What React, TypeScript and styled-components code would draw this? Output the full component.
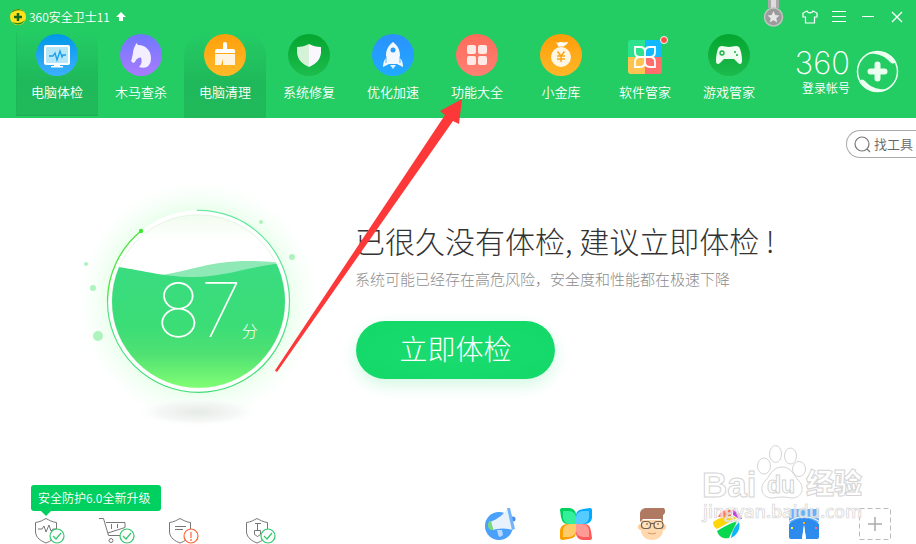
import React from "react";
import styled, { createGlobalStyle } from "styled-components";

const GlobalStyle = createGlobalStyle`
  * { box-sizing: border-box; }
  body {
    margin: 0;
    overflow: hidden;
    background: #fff;
    font-family: "Noto Sans CJK SC", sans-serif;
    font-size: 13px;
    font-weight: 350;
  }
  button, input { font: inherit; }
`;

const Page = styled.div`
  position: relative;
  display: flex;
  flex-direction: column;
  height: 100vh;
  overflow: hidden;
`;

const Header = styled.header`
  flex: none;
  color: #fff;
  background: #24cc64;
`;

const TitleBar = styled.div`
  display: flex;
  align-items: center;
  height: 33px;
  padding: 0 8px 0 9px;
`;

const AppTitle = styled.h1`
  margin: 0 6px 0 2px;
  font-size: 12px;
  font-weight: 350;
`;

const WindowControls = styled.div`
  display: flex;
  align-items: flex-start;
  gap: 6px;
  margin-left: auto;
  height: 33px;
`;

const PlainButton = styled.button`
  display: flex;
  align-items: center;
  justify-content: center;
  padding: 0;
  border: 0;
  background: none;
  color: inherit;
  cursor: pointer;
`;

const WindowButton = styled(PlainButton)`
  width: 23px;
  height: 33px;
`;

const MedalButton = styled(PlainButton)`
  width: 22px;
  height: 29px;
  margin-right: 8px;
`;

const Toolbar = styled.div`
  display: flex;
  justify-content: space-between;
  padding: 0 17px 0 16px;
  height: 85px;
`;

const Nav = styled.nav`
  display: flex;
  gap: 2px;
`;

const highlights = {
  none: "transparent",
  active: "linear-gradient(#24cc6400, #1fb85a 60%, #20ba5b)",
  hover: "linear-gradient(#24cc64, #1fb85a 60%, #20ba5b)",
};

const NavItem = styled(PlainButton)<{ $look: keyof typeof highlights }>`
  flex-direction: column;
  justify-content: flex-start;
  gap: 6px;
  width: 82px;
  height: ${(p) => (p.$look === "active" ? 83 : 85)}px;
  padding-top: 1px;
  line-height: 20px;
  border-radius: ${(p) => (p.$look === "hover" ? "22px 22px 0 0" : "0")};
  background: ${(p) => highlights[p.$look]};
  box-shadow: ${(p) => (p.$look === "active" ? "inset 0 -1px #1cae54, inset 1px -1px 1px #1cae5460" : "none")};
`;

const Account = styled(PlainButton)`
  align-self: flex-start;
  align-items: flex-start;
  gap: 6px;
  margin-top: 14px;
  > svg { margin-top: 3px; }
`;

const AccountText = styled.span`
  display: flex;
  flex-direction: column;
  align-items: flex-end;
  font-size: 12px;
  line-height: 18px;
`;

const Wordmark = styled.span`
  font-family: Inter, sans-serif;
  font-size: 31px;
  font-weight: 200;
  line-height: 32px;
`;

const Main = styled.main`
  flex: 1;
`;

const SearchRow = styled.div`
  display: flex;
  justify-content: flex-end;
  padding-top: 12px;
`;

const SearchBox = styled.label`
  display: flex;
  align-items: center;
  gap: 3px;
  width: 70px;
  height: 28px;
  padding-left: 7px;
  border: 1px solid #aaa;
  border-right: 0;
  border-radius: 14px 0 0 14px;
`;

const SearchInput = styled.input`
  flex: 1;
  min-width: 0;
  height: 20px;
  margin-bottom: 2px;
  padding: 0;
  border: 0;
  outline: 0;
  background: none;
  &::placeholder { color: #666; opacity: 1; }
`;

const Hero = styled.section`
  display: flex;
  gap: 45px;
  padding: 32px 0 0 70px;
`;

const Gauge = styled.div`
  display: grid;
  flex: none;
  width: 240px;
  height: 240px;
  > * { grid-area: 1 / 1; }
  > svg { overflow: visible; }
`;

const Score = styled.div`
  display: flex;
  align-items: baseline;
  z-index: 1;
  padding: 74px 0 0 86px;
  color: #fff;
  font-size: 16px;
  font-weight: 300;
`;

const ScoreNumber = styled.strong`
  font-family: Inter, sans-serif;
  font-size: 75px;
  font-weight: 100;
  line-height: 92px;
`;

const Advice = styled.div`
  padding-top: 32px;
  white-space: nowrap;
`;

const AdviceTitle = styled.h2`
  margin: 0;
  color: #333;
  font-size: 30px;
  font-weight: 200;
  line-height: 36px;
`;

const AdviceNote = styled.p`
  margin: 11px 0 32px;
  color: #8c8c8c;
  font-size: 15px;
  font-weight: 300;
  line-height: 20px;
`;

const CheckButton = styled(PlainButton)`
  width: 199px;
  height: 58px;
  margin-left: 1px;
  padding-bottom: 4px;
  border-radius: 29px;
  color: #fff;
  background: radial-gradient(ellipse, #1bdb70, #12d968);
  box-shadow: 0 6px 16px #12d96830;
  font-size: 28px;
  font-weight: 300;
`;

const Footer = styled.footer`
  display: flex;
  flex: none;
  justify-content: space-between;
  padding: 0 25px 0 31px;
  height: 59px;
`;

const Notice = styled.div`
  position: relative;
  width: max-content;
  margin-bottom: 7px;
  padding: 0 11px 0 7px;
  border-radius: 3px;
  color: #fff;
  background: #00d060;
  font-size: 12px;
  line-height: 26px;
  &::after {
    content: "";
    position: absolute;
    top: 100%;
    left: 10px;
    border: 5px solid transparent;
    border-top-color: #00d060;
    border-bottom: 0;
  }
`;

const StatusList = styled.div`
  display: flex;
  padding-left: 4px;
`;

const StatusButton = styled(PlainButton)<{ $span: number }>`
  justify-content: flex-start;
  width: ${(p) => p.$span}px;
`;

const Tools = styled.div`
  display: flex;
  gap: 39px;
  padding-top: 23px;
`;

const Apps = styled.div`
  display: flex;
  gap: 44px;
`;

const AppButton = styled(PlainButton)`
  width: 32px;
  height: 32px;
`;

const Watermark = styled.svg`
  position: absolute;
  right: 44px;
  bottom: 14px;
  pointer-events: none;
`;

const Pointer = styled.svg`
  position: absolute;
  left: 270px;
  top: 94px;
  pointer-events: none;
`;

type DiscProps = { id: string; from: string; to: string; children: React.ReactNode };

const Disc = ({ id, from, to, children }: DiscProps) => (
  <svg width="42" height="42" viewBox="0 0 42 42" aria-hidden="true">
    <defs>
      <linearGradient id={id} x2="0" y2="1">
        <stop stopColor={from} />
        <stop offset="1" stopColor={to} />
      </linearGradient>
    </defs>
    <circle cx="21" cy="21" r="21" fill={`url(#${id})`} />
    {children}
  </svg>
);

const navItems: { label: string; look: keyof typeof highlights; icon: React.ReactNode }[] = [
  {
    label: "电脑体检",
    look: "active",
    icon: (
      <Disc id="d1" from="#0098e8" to="#3db0ff">
        <rect x="8" y="11" width="26" height="20" rx="2" fill="#fff" />
        <rect x="10" y="13" width="22" height="16" rx="1" fill="#b5e7f8" />
        <path d="M18 31h6v1h3v1.500H15V32h3z" fill="#fff" />
        <path d="M13 22h4l2-3 2 7 3-9 2 6 1-2h3" fill="none" stroke="#159df0" strokeWidth="1.3" />
      </Disc>
    ),
  },
  {
    label: "木马查杀",
    look: "none",
    icon: (
      <Disc id="d2" from="#6f78ff" to="#a97bff">
        <path d="M16.500 9l1.500 2c8 0 13 6 13 13 0 4-1 7-4 9-3 1-5 1-8 0 3-3 3-6 2-9.500-3 0-5 1.500-6 4.500l-2 1-2-2c1-2 1-4 2-8 0-4 2-7 3.500-10z" fill="#f3efff" />
      </Disc>
    ),
  },
  {
    label: "电脑清理",
    look: "hover",
    icon: (
      <Disc id="d3" from="#ff9f0c" to="#ffb928">
        <path d="M19 9.500a2 1.500 0 0 1 4 0V15h6a2 2 0 0 1 2 2v2H11v-2a2 2 0 0 1 2-2h6z" fill="#fff" />
        <path d="M11 20h20v11H19v-6l-2 6h-6z" fill="#fff4e2" />
      </Disc>
    ),
  },
  {
    label: "系统修复",
    look: "none",
    icon: (
      <Disc id="d4" from="#04a62f" to="#1dbc4e">
        <path d="M21 10v23c-7-3-11-7-12-14v-6c5 0 8-1 12-3z" fill="#d5f2d9" />
        <path d="M21 10v23c7-3 11-7 12-14v-6c-5 0-8-1-12-3z" fill="#faf7ff" />
      </Disc>
    ),
  },
  {
    label: "优化加速",
    look: "none",
    icon: (
      <Disc id="d5" from="#2b91ff" to="#20aaff">
        <path d="M21 8c5 4 7 8 7 14v2c2 2 3 5 3 9l-6-3h-8l-6 3c0-4 1-7 3-9v-2c0-6 2-10 7-14z" fill="#f2f8ff" />
        <circle cx="21" cy="16" r="2.500" fill="#269aff" />
        <path d="M14 22v7M28 22v7" stroke="#239fff" strokeWidth=".7" />
        <path d="M18 31h6l-3 4z" fill="#e1f3ff" />
      </Disc>
    ),
  },
  {
    label: "功能大全",
    look: "none",
    icon: (
      <Disc id="d6" from="#ff6b5b" to="#ff8073">
        <g fill="#ffe9e7">
          <rect x="11" y="11" width="9" height="9" rx="2" />
          <rect x="22" y="11" width="9" height="9" rx="2" />
          <rect x="11" y="22" width="9" height="9" rx="2" />
          <rect x="22" y="22" width="9" height="9" rx="2" />
        </g>
      </Disc>
    ),
  },
  {
    label: "小金库",
    look: "none",
    icon: (
      <Disc id="d7" from="#ff9d0a" to="#ffb728">
        <path d="M15 8.500c3 1 4-1 6-.5s4 .5 7 0c-1 3-3 2.500-4 4.500h-6c0-2-1-3-3-4z" fill="#fff" />
        <circle cx="21" cy="23" r="10" fill="#fff6e6" />
        <path d="M17.500 17.500l3.500 4.500 3.500-4.500M21 22v6M17 22h8M17 25h8" fill="none" stroke="#fba51b" strokeWidth="1.500" />
      </Disc>
    ),
  },
  {
    label: "软件管家",
    look: "none",
    icon: (
      <svg width="46" height="42" viewBox="0 0 46 42" aria-hidden="true">
        <rect x="6" y="6" width="34" height="34" rx="3" fill="#2de28c" />
        <path d="M23 6h14a3 3 0 0 1 3 3v14H23z" fill="#13b9ff" />
        <path d="M6 23h17v17H9a3 3 0 0 1-3-3z" fill="#ffc352" />
        <path d="M23 23h17v14a3 3 0 0 1-3 3H23z" fill="#ff6d6d" />
        <path d="M23 23h-5c-3 0-5-2-5-5v-5h5c3 0 5 2 5 5zM23 23h5c3 0 5-2 5-5v-5h-5c-3 0-5 2-5 5zM23 23h-5c-3 0-5 2-5 5v5h5c3 0 5-2 5-5zM23 23h5c3 0 5 2 5 5v5h-5c-3 0-5-2-5-5z" fill="none" stroke="#fff" strokeWidth="1.8" />
        <circle cx="42" cy="6" r="3.5" fill="#ff4d43" stroke="#fff" strokeWidth="1" />
      </svg>
    ),
  },
  {
    label: "游戏管家",
    look: "none",
    icon: (
      <Disc id="d8" from="#04a62f" to="#1dba4d">
        <path d="M11 13c3-2 6 0 10 0s7-2 10 0c2 3 3 9 3 14 0 3-2 4-4 2l-4-4H16l-4 4c-2 2-4 1-4-2 0-5 1-11 3-14z" fill="#effcf0" />
        <circle cx="14" cy="19" r="2" fill="none" stroke="#12b23e" strokeWidth="1.3" />
        <circle cx="27" cy="18" r="1" fill="#12b23e" />
        <circle cx="29" cy="21" r="1" fill="#12b23e" />
      </Disc>
    ),
  },
];

const shield = "M0.5 4.500C5 4 8 2 11 0.500C14 2 17 4 21.500 4.500V14C21 20 16 23 11 25C6 23 1 20 0.500 14z";

const Badge = ({ x, alert }: { x: number; alert?: boolean }) => (
  <g fill="none" strokeWidth="1.2">
    <circle cx={x} cy="18" r="7" fill="#fff" stroke={alert ? "#ff6334" : "#31c86c"} />
    {alert ? (
      <path d={`M${x} 14v6M${x} 21v2`} stroke="#ff6334" />
    ) : (
      <path d={`M${x - 4} 18l3 3 5-6`} stroke="#31c86c" />
    )}
  </g>
);

const statuses = [
  {
    label: "安全防护",
    span: 64,
    badge: 22,
    drawing: <path d={shield + "M3 11h4l2-3 2 6 3-7 2 6 2-2h3"} />,
  },
  {
    label: "网购先赔",
    span: 70,
    badge: 28,
    drawing: (
      <>
        <path d="M0 .5h4.500l5 17h13M7 4.500h19v5L9 15M12.500 6v5M18.500 6v4" />
        <circle cx="12" cy="22.500" r="2" />
      </>
    ),
  },
  { label: "隐私保护", span: 77, badge: 22, alert: true, drawing: <path d={shield + "M6 8.500h11M6 11.500h8"} /> },
  {
    label: "查杀引擎",
    span: 36,
    badge: 22,
    drawing: <path d={shield + "M9 5.500h6M11.500 5.500v7M8.500 12.500h6v4l-3 2-3-2z"} />,
  },
];

const petals = [
  { turn: 0, edge: "#00d05c", fill: "#35f09a" },
  { turn: 90, edge: "#00aaff", fill: "#55ccff" },
  { turn: 180, edge: "#ff5a5a", fill: "#ff9a94" },
  { turn: 270, edge: "#f7a000", fill: "#ffca68" },
];

const apps = [
  {
    label: "消息",
    icon: (
      <>
        <circle cx="15" cy="18" r="14" fill="#4aa0fb" />
        <circle cx="29" cy="11" r="2.500" fill="#3f8ff0" />
        <path d="M6 14C14 11 20 6 24 0l5 22c-7-2-14-2-21 0z" fill="#e7f2fd" />
        <path d="M23 0l3 0 5 21-3 1z" fill="#71b4fa" />
        <path d="M5 13.500l2-.5 2.500 9H7c-3-1-4-5-2-8.500z" fill="#7bd97c" />
        <path d="M13 22h5l1 5-3 2-1.500-1z" fill="#b9dafb" />
      </>
    ),
  },
  {
    label: "软件",
    icon: (
      <>
        {petals.map((p) => (
          <g key={p.turn} transform={`rotate(${p.turn} 16 16)`}>
            <path d="M2 0h7c4 0 7 3 7 7v9H8c-5 0-6-3-7-7L0 2a2 2 0 0 1 2-2z" fill={p.edge} />
            <path d="M3 3h6c4 0 7 3 7 7v6h-6c-4 0-7-3-7-7z" fill={p.fill} />
          </g>
        ))}
      </>
    ),
  },
  {
    label: "客服",
    icon: (
      <>
        <path d="M5 12h22v10c0 6-5 10-11 10S5 28 5 22z" fill="#ffd9ad" />
        <circle cx="5" cy="19" r="3" fill="#ffcf9c" />
        <circle cx="27" cy="19" r="3" fill="#ffcf9c" />
        <path d="M4 14V6c0-4 3-6 7-6h17c2 3 1 6-1 7v7l-2-3H7z" fill="#b07a62" />
        <g fill="#ffe2bd" stroke="#6f6557" strokeWidth="1.200">
          <rect x="5.500" y="13.500" width="9" height="7" rx="3" />
          <rect x="18" y="13.500" width="9" height="7" rx="3" />
          <path d="M14.500 15.500h3.500" />
        </g>
        <circle cx="11" cy="16" r="1" fill="#b37c55" />
        <circle cx="22" cy="16" r="1" fill="#b37c55" />
        <path d="M12 25q4 2 8 0" fill="none" stroke="#d9975f" />
      </>
    ),
  },
  {
    label: "小贝",
    icon: (
      <>
        <path d="M7 7c2-4 6-5 9-5l-2 7H6z" fill="#ff7a59" />
        <path d="M16 2h5l-3 8-5-1z" fill="#f96f54" />
        <path d="M21 2c5 2 8 5 9 9h-3l-6-4z" fill="#c544dc" />
        <path d="M1 14c7-5 14-7 24-4L5 21c-3-2-4-4-4-7z" fill="#ffd60a" />
        <path d="M5 23c6-4 12-7 20-10-2 6-6 12-8 17-6 1-10-1-12-7z" fill="#09d84f" />
        <path d="M27 14c2 7-2 13-8 16 1-6 3-11 8-16z" fill="#10b5f5" />
      </>
    ),
  },
  {
    label: "宽带测速",
    icon: (
      <>
        <rect x="1" y="1" width="30" height="14" rx="2" fill="#66b0fb" />
        <path d="M1 16c9-8 21-8 30 0v13a2 2 0 0 1-2 2H18L16 17l-2 14H3a2 2 0 0 1-2-2z" fill="#2d8bee" />
        <path d="M16 17l2 14h-4z" fill="#fff" />
        <path d="M0 14c10-7 22-7 32 0" fill="none" stroke="#fff" />
        <path d="M15 14h2v2h-2z" fill="#ffb400" />
        <path d="M3 19h2v2H3z" fill="#f9f04a" />
        <path d="M27 19h2v2h-2z" fill="#ff6f7d" />
      </>
    ),
  },
];

const GaugeDrawing = () => (
  <svg width="240" height="240" viewBox="0 0 240 240" aria-hidden="true">
    <defs>
      <radialGradient id="halo">
        <stop offset="0.7" stopColor="#d8ffdc" stopOpacity="0.6" />
        <stop offset="0.85" stopColor="#e8ffec" stopOpacity="0.3" />
        <stop offset="1" stopColor="#fff" stopOpacity="0" />
      </radialGradient>
      <radialGradient id="ground">
        <stop stopColor="#e6eae7" />
        <stop offset="0.6" stopColor="#f2f5f3" stopOpacity="0.8" />
        <stop offset="1" stopColor="#fff" stopOpacity="0" />
      </radialGradient>
      <linearGradient id="liquid" x2="0" y2="1">
        <stop stopColor="#39dc80" />
        <stop offset="0.5" stopColor="#3bdd77" />
        <stop offset="0.72" stopColor="#4fe173" />
        <stop offset="1" stopColor="#84ff74" />
      </linearGradient>
      <linearGradient id="glass" x2="0" y2="1">
        <stop stopColor="#f2fcef" />
        <stop offset="0.15" stopColor="#fff" />
      </linearGradient>
      <linearGradient id="ring" x2="0" y2="1">
        <stop stopColor="#6be8a2" />
        <stop offset="1" stopColor="#3fdc74" />
      </linearGradient>
      <clipPath id="bowl">
        <circle cx="128.500" cy="111.300" r="86.500" />
      </clipPath>
    </defs>
    <circle cx="128.500" cy="111.300" r="126" fill="url(#halo)" />
    <ellipse cx="128" cy="222" rx="64" ry="15" fill="url(#ground)" />
    <circle cx="128.500" cy="111.300" r="91" fill="#fff" />
    <circle cx="128.500" cy="111.300" r="86.500" fill="url(#glass)" stroke="#e6f5e4" strokeWidth="1" />
    <g clipPath="url(#bowl)">
      <path d="M84 86C125 81 135 71 180 71Q200 71 220 74L210 90z" fill="#8fe9b6" />
      <path d="M40 76C70 79 90 87 125 87C155 87 175 77 220 72V200H40z" fill="url(#liquid)" />
    </g>
    <path d="M127 20.300A91 91 0 1 1 37.500 111" fill="none" stroke="url(#ring)" strokeWidth="1.200" />
    <path d="M37.500 111A91 91 0 0 1 71 41" fill="none" stroke="#48e63c" strokeWidth="1.300" />
    <circle cx="71" cy="41" r="2.200" fill="#3fea31" />
    <g fill="#aef3bd">
      <circle cx="191" cy="32" r="2" />
      <circle cx="222" cy="67" r="3" />
      <circle cx="16" cy="74" r="2" />
      <circle cx="23" cy="98" r="3" />
      <circle cx="28" cy="146" r="5" />
    </g>
  </svg>
);

export default function App() {
  return (
    <Page>
      <GlobalStyle />
      <Header>
        <TitleBar>
          <svg width="18" height="18" viewBox="0 0 18 18" aria-hidden="true">
            <circle cx="9" cy="9" r="8" fill="#ffe11c" />
            <path d="M2 5A8 8 0 0 1 15 4C11 1 6 2 2 5zM16 12A8 8 0 0 1 3 14c5 2 10 1 13-2z" fill="#278d19" />
            <path d="M9 5v8M5 9h8" stroke="#14671c" strokeWidth="2.500" />
          </svg>
          <AppTitle>360安全卫士11</AppTitle>
          <svg width="10" height="10" viewBox="0 0 10 10" aria-hidden="true">
            <path d="M5 0l5 5H7v4H3V5H0z" fill="#fff" />
          </svg>
          <WindowControls>
            <MedalButton aria-label="勋章">
              <svg width="22" height="29" viewBox="0 0 22 29">
                <path d="M6 0h11v8H6z" fill="#aaa" />
                <path d="M9 0h5v8H9z" fill="#ddd" />
                <circle cx="11.500" cy="17" r="9" fill="#9b9b9b" stroke="#c2c2c2" strokeWidth="1.500" />
                <path d="M11.500 11l1.800 4 4.200.4-3.200 2.800 1 4.200-3.800-2.200-3.800 2.200 1-4.200-3.200-2.800 4.200-.4z" fill="#e6e6e6" />
              </svg>
            </MedalButton>
            <WindowButton aria-label="换肤">
              <svg width="16" height="14" viewBox="0 0 16 14" fill="none" stroke="#fff" strokeWidth="1.200">
                <path d="M5 1L1 3v4h2.500v6h9V7H15V3l-4-2C10 3.500 6 3.500 5 1z" />
              </svg>
            </WindowButton>
            <WindowButton aria-label="菜单">
              <svg width="14" height="11" viewBox="0 0 14 11" stroke="#fff">
                <path d="M0 .5h14M0 5.500h14M0 10.500h14" />
              </svg>
            </WindowButton>
            <WindowButton aria-label="最小化">
              <svg width="12" height="1" viewBox="0 0 12 1">
                <path d="M0 .5h12" stroke="#fff" />
              </svg>
            </WindowButton>
            <WindowButton aria-label="关闭">
              <svg width="12" height="12" viewBox="0 0 12 12">
                <path d="M1 1l10 10M11 1L1 11" stroke="#fff" strokeWidth="1.400" />
              </svg>
            </WindowButton>
          </WindowControls>
        </TitleBar>
        <Toolbar>
          <Nav>
            {navItems.map((item) => (
              <NavItem key={item.label} $look={item.look}>
                {item.icon}
                {item.label}
              </NavItem>
            ))}
          </Nav>
          <Account>
            <AccountText>
              <Wordmark>360</Wordmark>
              登录帐号
            </AccountText>
            <svg width="43" height="43" viewBox="0 0 43 43" aria-hidden="true">
              <circle cx="21.500" cy="21.500" r="20" fill="none" stroke="#eafff0" strokeWidth="1.500" />
              <path d="M11 4C22-2 36 3 40 12c-2 2-4 2-6 0C28 5 20 3 11 4zM32 39C21 45 7 40 3 31c2-2 4-2 6 0 6 7 14 9 23 8z" fill="#eafff0" />
              <path d="M21.500 14.500v14M14.500 21.500h14" stroke="#eafff0" strokeWidth="6" strokeLinecap="round" />
            </svg>
          </Account>
        </Toolbar>
      </Header>

      <Main>
        <SearchRow>
          <SearchBox>
            <svg width="17" height="17" viewBox="0 0 17 17" fill="none" stroke="#777" strokeWidth="1.200" aria-hidden="true">
              <circle cx="8" cy="8" r="7" />
              <path d="M13 13l3 3" />
            </svg>
            <SearchInput aria-label="找工具" placeholder="找工具" />
          </SearchBox>
        </SearchRow>
        <Hero>
          <Gauge>
            <GaugeDrawing />
            <Score>
              <ScoreNumber>87</ScoreNumber>
              <span>分</span>
            </Score>
          </Gauge>
          <Advice>
            <AdviceTitle>已很久没有体检, 建议立即体检 !</AdviceTitle>
            <AdviceNote>系统可能已经存在高危风险，安全度和性能都在极速下降</AdviceNote>
            <CheckButton>立即体检</CheckButton>
          </Advice>
        </Hero>
      </Main>

      <Footer>
        <div>
          <Notice>安全防护6.0全新升级</Notice>
          <StatusList>
            {statuses.map((s) => (
              <StatusButton key={s.label} $span={s.span} aria-label={s.label}>
                <svg width="36" height="26" viewBox="0 0 36 26" fill="none" stroke="#777">
                  {s.drawing}
                  <Badge x={s.badge} alert={s.alert} />
                </svg>
              </StatusButton>
            ))}
          </StatusList>
        </div>
        <Tools>
          <Apps>
            {apps.map((a) => (
              <AppButton key={a.label} aria-label={a.label}>
                <svg width="32" height="32" viewBox="0 0 32 32">{a.icon}</svg>
              </AppButton>
            ))}
          </Apps>
          <AppButton aria-label="添加">
            <svg width="32" height="32" viewBox="0 0 32 32" fill="none">
              <rect x=".5" y=".5" width="31" height="31" stroke="#bbb" strokeDasharray="5 3" />
              <path d="M16 9v14M9 16h14" stroke="#aaa" strokeWidth="1.500" />
            </svg>
          </AppButton>
        </Tools>
      </Footer>

      <Watermark width="172" height="86" viewBox="0 0 172 86" fill="#fff" fillOpacity="0.7" stroke="#d4d4d4">
        <ellipse cx="75.500" cy="10" rx="6" ry="8.500" />
        <ellipse cx="90.500" cy="12" rx="6" ry="8" />
        <ellipse cx="64" cy="22" rx="6.500" ry="8" />
        <ellipse cx="99" cy="25" rx="6.500" ry="7.500" />
        <path d="M82 23c10 0 12 9 16 13 7 6 5 17-5 18-4 0-6-1-11-1s-7 1-11 1c-10-1-12-12-5-18 4-4 6-13 16-13z" />
        <g fontFamily="Liberation Sans, sans-serif" fontWeight="700">
          <text x="2" y="53" fontSize="35">Bai</text>
          <text x="67" y="49" fontSize="23">du</text>
        </g>
        <text x="106" y="50" fontFamily="Noto Sans CJK SC, sans-serif" fontSize="28" fontWeight="900">经验</text>
        <text x="3" y="74" fontFamily="Open Sans, sans-serif" fontSize="18" fontWeight="600" strokeWidth="0.700">jingyan.baidu.com</text>
      </Watermark>

      <Pointer width="200" height="285" viewBox="0 0 200 285" aria-hidden="true">
        <path d="M5 276.500L175 21l-5-4L192 5l-3 25-6-3L7 278z" fill="#fd3838" />
      </Pointer>
    </Page>
  );
}
